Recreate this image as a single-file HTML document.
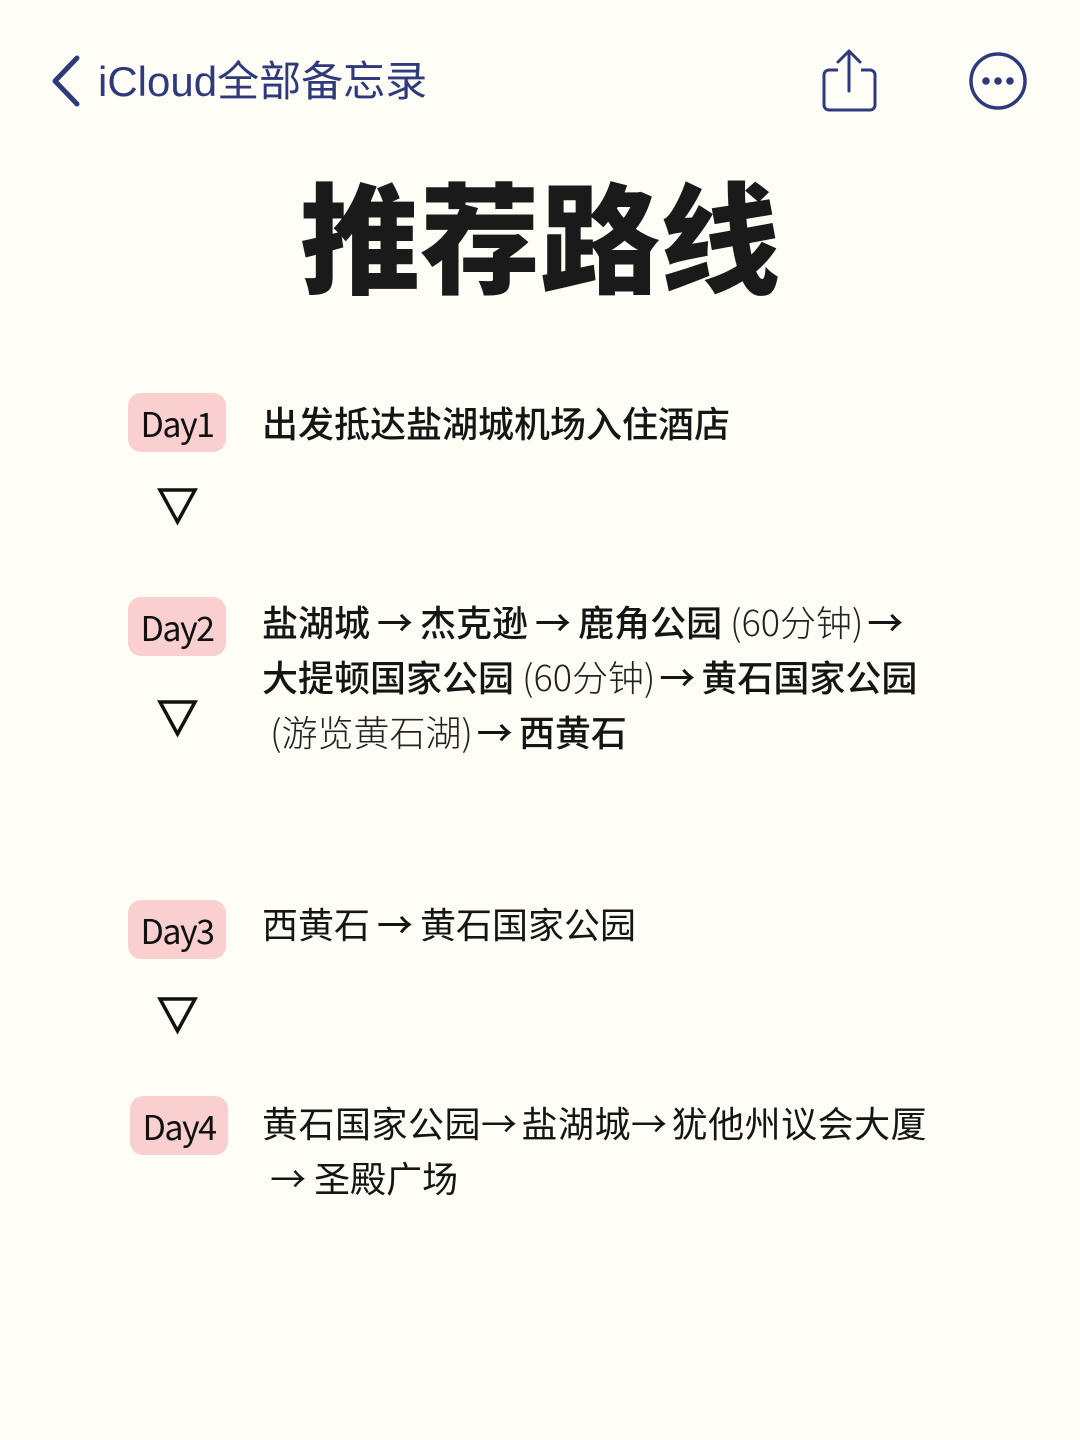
<!DOCTYPE html>
<html><head><meta charset="utf-8"><style>
html,body{margin:0;padding:0}
body{width:1080px;height:1440px;background:#fefef7;position:relative;overflow:hidden;font-family:"Liberation Sans","Noto Sans CJK SC",sans-serif;color:#151515}
.a{position:absolute;white-space:nowrap}
.nav{left:98px;top:54px;font-size:42px;color:#2f3a7c;line-height:56px}
.title{left:300px;top:157px;font-size:120px;font-weight:900;line-height:150px;color:#1a1a1a;font-family:"Noto Sans CJK SC",sans-serif}
.badge{position:absolute;left:128px;width:98px;height:59px;background:#f9cfcf;border-radius:13px;font-size:34px;line-height:59px;text-align:center;color:#111;font-family:"Noto Sans CJK SC","Liberation Sans",sans-serif;letter-spacing:-1.5px}
.t{position:absolute;left:262px;font-size:36px;line-height:55px;font-weight:500;font-family:"Noto Sans CJK SC",sans-serif;white-space:nowrap}
.l{font-weight:300;color:#222}
.ar{font-family:"Noto Sans CJK SC",sans-serif;margin:0 7px;font-weight:500}
.ar0{font-family:"Noto Sans CJK SC",sans-serif;margin:0 6px 0 4px}
.ar1{font-family:"Noto Sans CJK SC",sans-serif;margin:0 4px 0 0}
.tri{position:absolute;left:157px}
</style></head><body>
<svg class="a" style="left:0;top:0" width="1080" height="140">
<path d="M77 58 L55 81 L77 104" fill="none" stroke="#2f3a7c" stroke-width="5" stroke-linecap="round" stroke-linejoin="round"/>
<path d="M838 70 H829 a5 5 0 0 0 -5 5 V105 a5 5 0 0 0 5 5 H870 a5 5 0 0 0 5 -5 V75 a5 5 0 0 0 -5 -5 H861" fill="none" stroke="#2f3a7c" stroke-width="3"/>
<path d="M849 91 V51 M838 62 L849 51 L860 62" fill="none" stroke="#2f3a7c" stroke-width="3" stroke-linecap="round" stroke-linejoin="round"/>
<circle cx="998" cy="81" r="27" fill="none" stroke="#2f3a7c" stroke-width="3.5"/>
<circle cx="986" cy="81" r="3.8" fill="#2f3a7c"/><circle cx="998" cy="81" r="3.8" fill="#2f3a7c"/><circle cx="1010" cy="81" r="3.8" fill="#2f3a7c"/>
</svg>
<div class="a nav">iCloud全部备忘录</div>
<div class="a title">推荐路线</div>

<div class="badge" style="top:393px">Day1</div>
<div class="t" style="top:395px">出发抵达盐湖城机场入住酒店</div>
<svg class="tri" style="top:486px" width="42" height="40"><path d="M3 4 H38 L20.5 36 Z" fill="none" stroke="#111" stroke-width="3.5"/></svg>

<div class="badge" style="top:597px">Day2</div>
<div class="t" style="top:594px">盐湖城<span class="ar">→</span>杰克逊<span class="ar">→</span>鹿角公园 <span class="l">(60分钟)</span><span class="ar0">→</span></div>
<div class="t" style="top:649px">大提顿国家公园 <span class="l">(60分钟)</span><span class="ar0">→</span>黄石国家公园</div>
<div class="t" style="top:704px">&nbsp;<span class="l">(游览黄石湖)</span><span class="ar0">→</span>西黄石</div>
<svg class="tri" style="top:698px" width="42" height="40"><path d="M3 4 H38 L20.5 36 Z" fill="none" stroke="#111" stroke-width="3.5"/></svg>

<div class="badge" style="top:900px">Day3</div>
<div class="t" style="top:896px;font-weight:400">西黄石<span class="ar">→</span>黄石国家公园</div>
<svg class="tri" style="top:995px" width="42" height="40"><path d="M3 4 H38 L20.5 36 Z" fill="none" stroke="#111" stroke-width="3.5"/></svg>

<div class="badge" style="top:1096px;left:130px">Day4</div>
<div class="t" style="top:1095px;font-weight:400;letter-spacing:0.5px">黄石国家公园<span class="ar1">→</span>盐湖城<span class="ar1">→</span>犹他州议会大厦</div>
<div class="t" style="top:1150px;font-weight:400">&nbsp;→ 圣殿广场</div>
</body></html>
